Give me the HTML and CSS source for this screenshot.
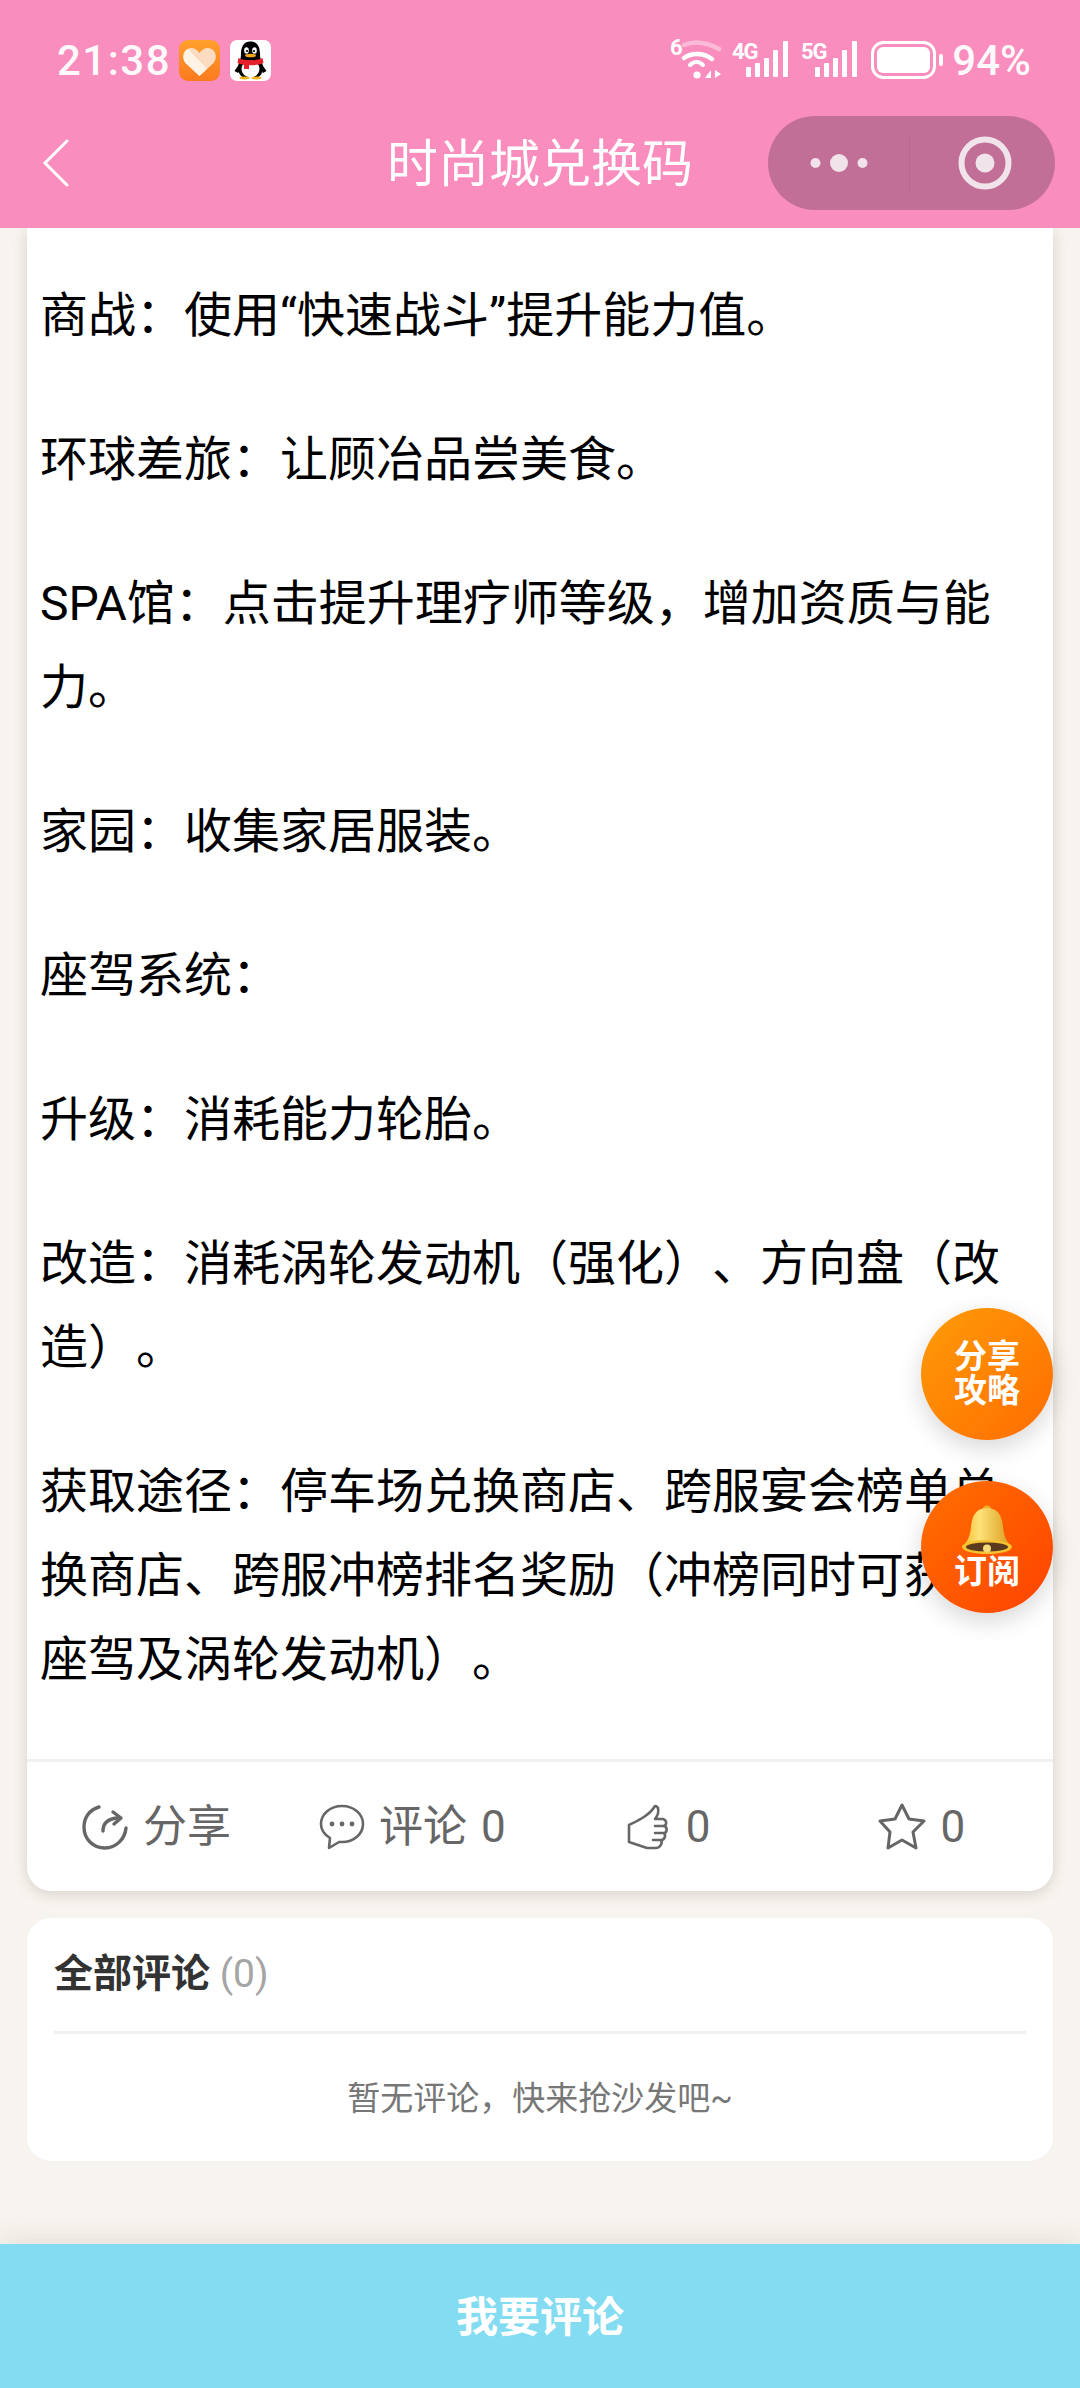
FILE: index.html
```html
<!DOCTYPE html>
<html lang="zh-CN">
<head>
    <meta charset="UTF-8">
    <meta name="viewport" content="width=device-width, initial-scale=1.0">
    <title>时尚城兑换码</title>
    <link rel="stylesheet" href="styles.css">
</head>
<body>
    <header class="top">
        <div class="status">
            <span class="clock">21:38</span>
            <svg class="app-icon" width="41" height="41" viewBox="0 0 41 41">
                <defs>
                    <linearGradient id="heartBg" x1="0" y1="0" x2="0" y2="1">
                        <stop offset="0" stop-color="#ffa02c"/>
                        <stop offset="1" stop-color="#fb7a1f"/>
                    </linearGradient>
                </defs>
                <rect width="41" height="41" rx="9" fill="url(#heartBg)"/>
                <path d="M20.5 36 L6.5 23 C1.5 17 5 8 12 8 C16 8 18.5 10 20.5 13 C22.5 10 25 8 29 8 C36 8 39.5 17 34.5 23 Z" fill="#fbdcc0"/>
                <path d="M20.5 36 L6.5 23 C3 18 5 11 9 9 L28 29 Z" fill="#fff3e6"/>
            </svg>
            <svg class="app-icon" width="41" height="41" viewBox="0 0 41 41">
                <rect width="41" height="41" rx="7" fill="#fff"/>
                <path d="M20.5 1.5 C13 1.5 11 8 11 14 C11 18 10 20 9 23 C7 27 8 35 13 37 H28 C33 35 34 27 32 23 C31 20 30 18 30 14 C30 8 28 1.5 20.5 1.5 Z" fill="#000"/>
                <path d="M10 23 L4.5 31 L8 33 L11.5 28 Z M31 23 L36.5 31 L33 33 L29.5 28 Z" fill="#000"/>
                <ellipse cx="20.5" cy="29" rx="9" ry="8.5" fill="#fff"/>
                <ellipse cx="16.5" cy="10.5" rx="2.3" ry="3.2" fill="#fff"/>
                <ellipse cx="24.5" cy="10.5" rx="2.3" ry="3.2" fill="#fff"/>
                <circle cx="17" cy="11" r="1.1" fill="#000"/>
                <circle cx="24" cy="11" r="1.1" fill="#000"/>
                <ellipse cx="20.5" cy="15.5" rx="5.5" ry="1.8" fill="#f2a81c"/>
                <path d="M8.5 18 C14 21 27 21 32.5 18 L33.5 23 C27 26 14 26 7.5 23 Z" fill="#e5202b"/>
                <rect x="14" y="23" width="5" height="6" fill="#e5202b"/>
                <ellipse cx="14.5" cy="38" rx="5" ry="1.4" fill="#f2b21c"/>
                <ellipse cx="26.5" cy="38" rx="5" ry="1.4" fill="#f2b21c"/>
            </svg>
            <div class="status-right">
                <svg class="wifi" width="52" height="60" viewBox="0 -10 52 60">
                    <text x="0" y="15" class="tiny">6</text>
                    <path d="M14 5 C24 1 36 2 49 9" fill="none" stroke="#fff" stroke-opacity=".4" stroke-width="4.5" stroke-linecap="round"/>
                    <path d="M14 18 C22 12 34 13 42 19" fill="none" stroke="#fff" stroke-width="4.5" stroke-linecap="round"/>
                    <path d="M20 25 C24 21 29 21 33 25" fill="none" stroke="#fff" stroke-width="4" stroke-linecap="round"/>
                    <circle cx="27" cy="35" r="3.6" fill="#fff"/>
                    <path d="M41 30 V38 H35 Z M45 30 L51 34 L45 38 Z" fill="#fff"/>
                </svg>
                <svg class="signal" width="56" height="60" viewBox="0 -10 56 60">
                    <text x="0" y="19" class="tiny">4G</text>
                    <rect x="14" y="27" width="5" height="10" rx="1" fill="#fff"/>
                    <rect x="23" y="23" width="5" height="14" rx="1" fill="#fff"/>
                    <rect x="32" y="18" width="5" height="19" rx="1" fill="#fff"/>
                    <rect x="41" y="10" width="5" height="27" rx="1" fill="#fff"/>
                    <rect x="51" y="1" width="5" height="36" rx="1" fill="#fff"/>
                </svg>
                <svg class="signal" width="56" height="60" viewBox="0 -10 56 60">
                    <text x="0" y="19" class="tiny">5G</text>
                    <rect x="14" y="27" width="5" height="10" rx="1" fill="#fff"/>
                    <rect x="23" y="23" width="5" height="14" rx="1" fill="#fff"/>
                    <rect x="32" y="18" width="5" height="19" rx="1" fill="#fff"/>
                    <rect x="41" y="10" width="5" height="27" rx="1" fill="#fff"/>
                    <rect x="51" y="1" width="5" height="36" rx="1" fill="#fff"/>
                </svg>
                <svg class="battery" width="74" height="38" viewBox="0 0 74 38">
                    <rect x="1.5" y="1.5" width="62" height="35" rx="11" fill="none" stroke="#fff" stroke-width="3"/>
                    <rect x="6" y="6" width="53" height="26" rx="6" fill="#fff"/>
                    <rect x="68" y="13" width="4" height="12" rx="2" fill="#fff"/>
                </svg>
                <span class="percent">94%</span>
            </div>
        </div>
        <div class="nav">
            <svg class="back" width="28" height="48" viewBox="0 0 28 48">
                <path d="M25 2 L3 24 L25 46" fill="none" stroke="#fff" stroke-width="3" stroke-linecap="round" stroke-linejoin="miter"/>
            </svg>
            <h1 class="nav-title">时尚城兑换码</h1>
            <div class="capsule">
                <div class="capsule-part">
                    <svg width="62" height="20" viewBox="0 0 62 20">
                        <circle cx="7.5" cy="10" r="5" fill="#f0e3ea"/>
                        <circle cx="31" cy="10" r="9" fill="#f0e3ea"/>
                        <circle cx="54.5" cy="10" r="5" fill="#f0e3ea"/>
                    </svg>
                </div>
                <div class="capsule-part capsule-line">
                    <svg width="54" height="54" viewBox="0 0 54 54">
                        <circle cx="27" cy="27" r="23.5" fill="none" stroke="#f0e3ea" stroke-width="6"/>
                        <circle cx="27" cy="27" r="9.5" fill="#f0e3ea"/>
                    </svg>
                </div>
            </div>
        </div>
    </header>

    <main class="content">
        <article class="card">
            <div class="article-body">
                <p>商战：使用“快速战斗”提升能力值。</p>
                <p>环球差旅：让顾冶品尝美食。</p>
                <p>SPA馆：点击提升理疗师等级，增加资质与能力。</p>
                <p>家园：收集家居服装。</p>
                <p>座驾系统：</p>
                <p>升级：消耗能力轮胎。</p>
                <p>改造：消耗涡轮发动机（强化）、方向盘（改造）。</p>
                <p>获取途径：停车场兑换商店、跨服宴会榜单兑换商店、跨服冲榜排名奖励（冲榜同时可获得座驾及涡轮发动机）。</p>
            </div>
            <div class="actions">
                <div class="action action-share">
                    <svg width="46" height="46" viewBox="0 0 46 46">
                        <path d="M17 3 C7 6 2 14 2 23 C2 35 11 44 23 44 C34 44 43 35 44 24" fill="none" stroke="#666" stroke-width="3.4" stroke-linecap="round"/>
                        <path d="M21 27 C21 20 25 15 35 14" fill="none" stroke="#666" stroke-width="3.4" stroke-linecap="round"/>
                        <path d="M31 8 L39 14 L32 20" fill="none" stroke="#666" stroke-width="3.4" stroke-linecap="round" stroke-linejoin="round"/>
                    </svg>
                    <span>分享</span>
                </div>
                <div class="action action-comment">
                    <svg width="46" height="46" viewBox="0 0 46 46">
                        <path d="M23 2 C11 2 2 10 2 20 C2 26 6 31 11 34 L10 44 L20 38 C21 38 22 38 23 38 C35 38 44 30 44 20 C44 10 35 2 23 2 Z" fill="none" stroke="#666" stroke-width="2.6" stroke-linejoin="round"/>
                        <circle cx="13" cy="20" r="2.4" fill="#666"/>
                        <circle cx="23" cy="20" r="2.4" fill="#666"/>
                        <circle cx="33" cy="20" r="2.4" fill="#666"/>
                    </svg>
                    <span>评论 0</span>
                </div>
                <div class="action action-like">
                    <svg width="42" height="46" viewBox="0 0 42 46">
                        <path d="M2 21 C10 17 22 12 28 2 C32 2 32 8 30 12 L28 15 L36 15 C40 16 40 21 37 22 C41 23 40 29 37 29 C39 31 38 36 34 36 C36 39 33 44 29 44 L20 44 L2 38 Z" fill="none" stroke="#666" stroke-width="2.6" stroke-linejoin="round"/>
                        <path d="M28 22 H37 M28 29 H36 M26 36 H33" fill="none" stroke="#666" stroke-width="2.6" stroke-linecap="round"/>
                    </svg>
                    <span>0</span>
                </div>
                <div class="action action-star">
                    <svg width="48" height="48" viewBox="0 0 48 48">
                        <path d="M24 2 L31 16 L46 18 L35 29 L38 45 L24 37 L10 45 L12 29 L2 18 L17 16 Z" fill="none" stroke="#666" stroke-width="3" stroke-linejoin="round"/>
                    </svg>
                    <span>0</span>
                </div>
            </div>
        </article>

        <section class="comments">
            <div class="comments-head">全部评论 <span class="comments-count">(0)</span></div>
            <div class="comments-empty">暂无评论，快来抢沙发吧~</div>
        </section>
    </main>

    <div class="comment-bar">我要评论</div>

    <div class="float-btn float-share">分享<br>攻略</div>
    <div class="float-btn float-sub">
        <svg width="54" height="50" viewBox="0 0 54 50">
            <defs>
                <linearGradient id="bell" x1="0" y1="0" x2="1" y2="0">
                    <stop offset="0" stop-color="#f7b92a"/>
                    <stop offset=".35" stop-color="#fde27a"/>
                    <stop offset="1" stop-color="#d99a18"/>
                </linearGradient>
            </defs>
            <circle cx="27" cy="5" r="4.5" fill="#eeb02a"/>
            <path d="M27 3 C15 3 12 12 11 22 C10 31 8 36 2 42 L52 42 C46 36 44 31 43 22 C42 12 39 3 27 3 Z" fill="url(#bell)"/>
            <ellipse cx="27" cy="42" rx="25" ry="7" fill="#f6c22f"/>
            <ellipse cx="27" cy="42" rx="21" ry="4.6" fill="#5b3a20"/>
            <circle cx="27" cy="43.5" r="4" fill="#f3dc7a"/>
        </svg>
        <span>订阅</span>
    </div>
</body>
</html>
```

FILE: styles.css
```css
html, body {
    margin: 0;
    padding: 0;
}
body {
    width: 1080px;
    height: 2388px;
    display: flex;
    flex-direction: column;
    overflow: hidden;
    position: relative;
    background-color: #f7f4ef;
    font-family: Roboto, "Noto Sans CJK SC", sans-serif;
    text-spacing-trim: space-all;
    color: #000;
}

/* top bar */
.top {
    height: 228px;
    flex: none;
    background-color: #f98dbd;
    color: #fff;
    position: relative;
    z-index: 2;
}
.status {
    height: 116px;
    padding: 4px 49px 0 57px;
    box-sizing: border-box;
    display: flex;
    align-items: center;
}
.clock {
    font-size: 42px;
    font-weight: 500;
    letter-spacing: 1.5px;
    width: 122px;
    opacity: .95;
}
.app-icon {
    margin-right: 10px;
}
.status-right {
    margin-left: auto;
    display: flex;
    align-items: center;
}
.tiny {
    font-size: 22px;
    font-weight: 700;
    letter-spacing: -1px;
    fill: #fff;
}
.wifi {
    margin-right: 10px;
}
.signal {
    margin-right: 13px;
}
.battery {
    margin-left: 1px;
    margin-right: 7px;
}
.percent {
    font-size: 42px;
    font-weight: 500;
    opacity: .95;
}
.nav {
    height: 94px;
    padding: 0 25px 18px;
    display: grid;
    grid-template-columns: 1fr auto 1fr;
    align-items: center;
}
.back {
    display: block;
    margin-left: 17px;
}
.nav-title {
    margin: 3px 0 0;
    font-size: 51px;
    font-weight: 400;
    line-height: 88px;
}
.capsule {
    justify-self: end;
    width: 287px;
    height: 94px;
    border-radius: 47px;
    background-color: #c26f98;
    display: flex;
    align-items: center;
}
.capsule-part {
    flex: 1;
    height: 57px;
    display: flex;
    align-items: center;
    justify-content: center;
}
.capsule-line {
    border-left: 1px solid #b96791;
    padding-left: 4px;
}

/* article */
.content {
    flex: 1;
    padding: 0 27px;
}
.card {
    background-color: #fff;
    border-radius: 0 0 24px 24px;
    box-shadow: 0 3px 14px rgba(90, 70, 50, .2);
}
.article-body {
    padding: 46px 40px 57px 13px;
    font-size: 48px;
    line-height: 84px;
}
.article-body p {
    margin: 0 0 60px;
}
.article-body p:last-child {
    margin-bottom: 0;
}
.actions {
    height: 129px;
    border-top: 3px solid #f0f0f0;
    display: flex;
    align-items: center;
    color: #666;
    font-size: 44px;
}
.action {
    display: flex;
    align-items: center;
    word-spacing: 3px;
}
.action span {
    line-height: 46px;
}
.action-share {
    margin-left: 55px;
    gap: 15px;
}
.action-comment {
    margin-left: 88px;
    gap: 14px;
}
.action-like {
    margin-left: 121px;
    gap: 17px;
}
.action-star {
    margin-left: 168px;
    gap: 14px;
}

/* comments */
.comments {
    margin-top: 27px;
    height: 243px;
    background-color: #fff;
    border-radius: 24px;
    padding: 0 27px;
    box-sizing: border-box;
}
.comments-head {
    height: 116px;
    line-height: 112px;
    box-sizing: border-box;
    border-bottom: 3px solid #f0f0f0;
    font-size: 39px;
    font-weight: 700;
    color: #333;
}
.comments-count {
    font-weight: 400;
    color: #a5a5a5;
}
.comments-empty {
    text-align: center;
    font-size: 33px;
    line-height: 44px;
    margin-top: 43px;
    color: #777;
}
.comment-bar {
    height: 144px;
    flex: none;
    background-color: #84dcf2;
    color: #fff;
    font-size: 42px;
    font-weight: 700;
    line-height: 148px;
    text-align: center;
    box-shadow: 0 -6px 24px rgba(90, 70, 50, .1);
    position: relative;
}

/* floating buttons */
.float-btn {
    position: absolute;
    left: 921px;
    width: 132px;
    height: 132px;
    border-radius: 50%;
    color: #fff;
    font-size: 33px;
    font-weight: 700;
    line-height: 34px;
    text-align: center;
    box-shadow: 0 8px 24px rgba(0, 0, 0, .16);
    display: flex;
    flex-direction: column;
    align-items: center;
    justify-content: center;
}
.float-share {
    top: 1308px;
    background: linear-gradient(135deg, #ff9c08, #ff6c00);
}
.float-sub {
    top: 1481px;
    background: linear-gradient(135deg, #ff7000, #ff4200);
}
```
